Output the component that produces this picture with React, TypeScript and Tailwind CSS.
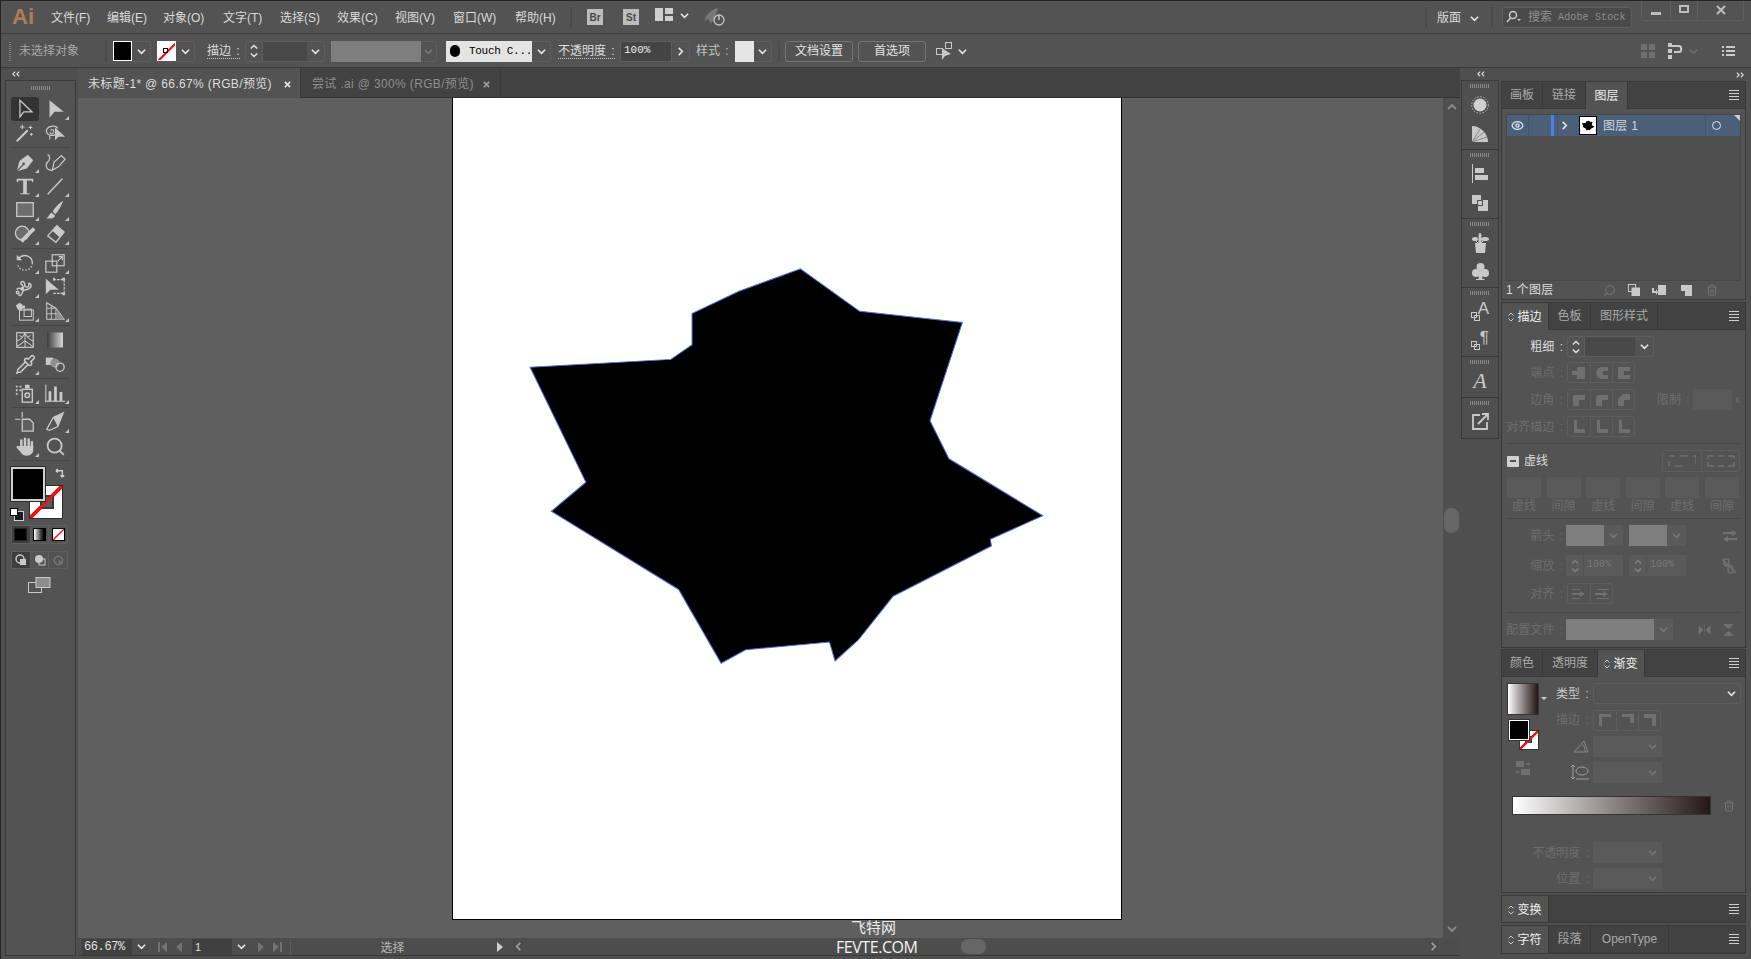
import React from "react";
import { Eye, Search, Trash2, Pipette } from "lucide-react";

const C = "#c9c9c9";

function Svg({ w = 22, h = 22, vb = "0 0 24 24", children, className = "" }: { w?: number; h?: number; vb?: string; children: React.ReactNode; className?: string }) {
  return (
    <svg width={w} height={h} viewBox={vb} fill="none" stroke={C} strokeWidth={1.6} className={"block shrink-0 " + className}>
      {children}
    </svg>
  );
}

function Chev({ color = "#e6e6e6", dir = "down", size = 9 }: { color?: string; dir?: "down" | "up" | "left" | "right"; size?: number }) {
  const pts = { down: "1,3 5,7 9,3", up: "1,7 5,3 9,7", left: "7,1 3,5 7,9", right: "3,1 7,5 3,9" }[dir];
  return (
    <svg width={size} height={size} viewBox="0 0 10 10" fill="none" stroke={color} strokeWidth={1.8} className="block shrink-0">
      <polyline points={pts} />
    </svg>
  );
}

function Burger() {
  return (
    <div className="flex flex-col gap-[2px] w-[10px]">
      <div className="h-px bg-[#cfcfcf]" />
      <div className="h-px bg-[#cfcfcf]" />
      <div className="h-px bg-[#cfcfcf]" />
      <div className="h-px bg-[#cfcfcf]" />
    </div>
  );
}

function Grip({ w = 20 }: { w?: number }) {
  return (
    <div className="h-[4px] mx-auto" style={{ width: w, backgroundImage: "repeating-linear-gradient(90deg,#8a8a8a 0 1px,transparent 1px 2px)" }} />
  );
}

function NoneSwatch({ size, cls = "" }: { size: number; cls?: string }) {
  return (
    <svg width={size} height={size} viewBox="0 0 20 20" className={"block shrink-0 " + cls}>
      <rect x="0" y="0" width="20" height="20" fill="#fff" />
      <line x1="0" y1="20" x2="20" y2="0" stroke="#f01010" strokeWidth="2.4" />
    </svg>
  );
}

/* ---------- tool icons ---------- */
const T = {
  select: <Svg><path d="M6.5 2.5v18l4.2-5.3h9z" strokeWidth={1.4} /></Svg>,
  direct: <Svg><path d="M6 2.5v19l5.5-6.5h10z" fill={C} stroke="none" /></Svg>,
  wand: <Svg><path d="M3 21 15 9" strokeWidth={2.4} /><path d="M9 3v5M6.5 5.500h5M18 4v4M16 6h4M19 12v3M17.500 13.500h3" strokeWidth={1.2} /></Svg>,
  lasso: <Svg><path d="M15 7C13 3 5 4 3 8c-2 5 4 8 9 6" strokeWidth={1.3} /><path d="M7 9c3-2 5 1 3 3-1 2-4 1-3-1M6 15c1 2 1 3 0 4" strokeWidth={1.2} /><path d="M12 6v14l4-4h7z" fill={C} stroke="none" /></Svg>,
  pen: <Svg><path d="M3 22 6 11l9-7 6 6-7 9z" fill={C} stroke="none" /><path d="m3 22 7-7" stroke="#535353" strokeWidth={1.2} /><circle cx="10.500" cy="14" r="1.500" fill="#535353" stroke="none" /></Svg>,
  curv: <Svg><path d="M9 21 11 12l8-7 4 4-7 8z" strokeWidth={1.3} /><path d="M9 21c-7 0-8-6-5-9s3-7 0-8" strokeWidth={1.3} /></Svg>,
  type: <Svg><path d="M3 4h18v4h-1l-1-2h-5v14h3v1H7v-1h3V6H5L4 8H3z" fill={C} stroke="none" /></Svg>,
  line: <Svg><path d="M4 21 20 4" /></Svg>,
  rect: <Svg><rect x="3" y="4" width="18" height="15" fill="#6d6d6d" strokeWidth={1.4} /></Svg>,
  brush: <Svg><path d="M21 2C16 5 11 10 9.500 14l3 2.500C16 13 19 7 21 2z" fill={C} stroke="none" /><path d="M8.500 15C5 16 6 20 2 21c5 1 10 0 10-3z" fill={C} stroke="none" /></Svg>,
  shaper: <Svg><circle cx="9" cy="11" r="7.500" fill="#6d6d6d" strokeWidth={1.4} /><path d="M8 20 22 6" strokeWidth={4} /></Svg>,
  eraser: <Svg><path d="m4 14 10-11 8 7-9 11z" fill="none" strokeWidth={1.4} /><path d="M9 8.500 14 3l8 7-5 5.500z" fill={C} stroke="none" /></Svg>,
  rotate: <Svg><path d="M5 7c5-6 15-3 15 5" strokeWidth={1.5} /><path d="M20 12c0 9-13 11-16 2" strokeDasharray="1.500 2" strokeWidth={1.5} /><path d="M3 3v6h6z" fill={C} stroke="none" /></Svg>,
  scale: <Svg><rect x="9" y="3" width="13" height="12" strokeWidth={1.3} /><rect x="2" y="10" width="12" height="12" strokeWidth={1.3} /><path d="m15 10 5-5M16 5h4v4" strokeWidth={1.2} /></Svg>,
  warp: <Svg><path d="M3 15c1-3 4-1 6-1s1-4-1-5 1-5 3-2-1 5 3 5 1-5 3-4 3 4-1 6-6 0-7 4-3 4-4 2" strokeWidth={1.6} /><circle cx="4" cy="18" r="1.400" /><circle cx="9" cy="14" r="1.300" /></Svg>,
  free: <Svg><path d="M2 3v17l5-5h9z" fill={C} stroke="none" /><path d="M10 4h12v15H9" strokeWidth={1.2} strokeDasharray="3 1" /><path d="M10 2h2v3h-2zM20 2h3v3h-3zM20 18h3v3h-3z" fill={C} stroke="none" /></Svg>,
  builder: <Svg><rect x="6" y="11" width="15" height="11" strokeWidth={1.1} /><rect x="11" y="10" width="8" height="8" strokeWidth={1.1} /><path d="M2 6l4-3 3 2 1 4-3 3-3-2z" fill={C} stroke="none" /><path d="M9 6h3v3H9z" fill={C} stroke="none" /></Svg>,
  persp: <Svg><path d="M3 3v18h19L13 9z" strokeWidth={1.1} /><path d="M3 9h10M3 15h15M8 6v15M13 9v12" strokeWidth={1} /><path d="M14 12l8 9H14z" fill="#8f8f8f" stroke="none" /></Svg>,
  mesh: <Svg><rect x="3" y="4" width="18" height="16" strokeWidth={1.3} /><path d="M3 13c5-1 7-4 9-9M3 19c5-2 7-5 9-6 2 1 5 4 9 6M12 4v16M21 13c-4-1-7-4-9-9M6 7l3 2M18 7l-3 2" strokeWidth={1.1} /></Svg>,
  gradient: (
    <svg width="20" height="20" viewBox="0 0 20 20" className="block"><defs><linearGradient id="g1"><stop offset="0" stopColor="#3d3d3d" /><stop offset="1" stopColor="#d8d8d8" /></linearGradient></defs><rect x="2" y="2.500" width="16" height="15" fill="url(#g1)" /></svg>
  ),
  eyedrop: <Pipette size={21} color={C} strokeWidth={1.7} />,
  blend: <Svg><rect x="2" y="5" width="8" height="8" fill={C} stroke="none" /><circle cx="12" cy="11" r="5" fill="#8f8f8f" stroke="none" /><circle cx="17.500" cy="15.500" r="4.500" strokeWidth={1.5} /></Svg>,
  spray: <Svg><rect x="9" y="8" width="11" height="14" strokeWidth={1.5} /><rect x="12" y="3" width="5" height="4" fill={C} stroke="none" /><circle cx="14.500" cy="14.500" r="2.500" /><path d="M2 4h2v2H2zM6 4h2v2H6zM2 8h2v2H2zM6 8h2v2H6zM2 12h2v2H2z" fill={C} stroke="none" /></Svg>,
  chart: <Svg><path d="M2 22V3" strokeWidth={1.2} /><path d="M1 21h22" strokeWidth={1.2} /><path d="M5 10h3v11H5zM11 5h3v16h-3zM17 11h3v10h-3z" fill={C} stroke="none" /></Svg>,
  artboard: <Svg><path d="M9 9h8l4 4v9H9z" fill="#5f5f5f" strokeWidth={1.4} /><path d="M1 9h6M9 1v6" strokeWidth={1.3} /></Svg>,
  slice: <Svg><path d="M21 2 10 7 3 20l3 1 9-4z" strokeWidth={1.4} /><path d="M21 2l-6 15-5-10z" fill={C} stroke="none" /></Svg>,
  hand: (
    <svg width="22" height="22" viewBox="0 0 24 24" fill={C} stroke="none" className="block shrink-0">
      <path d="M8 13V6M12 12V4M16 12V5M19.500 14V8" stroke={C} strokeWidth={2.7} strokeLinecap="round" />
      <path d="M6.500 12h14.500v4c0 4-3 6.500-7 6.500-3 0-5-1-6.500-3.500L3 14c-.8-1.500.8-2.800 2-1.800z" />
    </svg>
  ),
  zoom: <Search size={21} color={C} strokeWidth={2} />,
};

function Tool({ icon, active, corner = true }: { icon: React.ReactNode; active?: boolean; corner?: boolean }) {
  return (
    <div className={"relative w-[28px] h-[24px] flex items-center justify-center rounded-[3px] " + (active ? "bg-[#333333]" : "")}>
      {icon}
      {corner && <div className="absolute right-[0px] bottom-[1px] w-0 h-0 border-l-[4px] border-l-transparent border-b-[4px] border-b-[#c4c4c4]" />}
    </div>
  );
}

function ToolRow({ a, b, aCorner = true, bCorner = true, active = false }: { a: React.ReactNode; b: React.ReactNode; aCorner?: boolean; bCorner?: boolean; active?: boolean }) {
  return (
    <div className="flex gap-[2px] pl-[5px]">
      <Tool icon={a} corner={aCorner} active={active} />
      <Tool icon={b} corner={bCorner} />
    </div>
  );
}

const Sep = () => <div className="h-px bg-[#454545] mx-[5px] my-[2px]" />;

function LeftBar() {
  return (
    <div className="w-[77px] shrink-0 flex flex-col">
      <div className="h-[12px] flex items-center pl-[10px] text-[8px] leading-none text-[#c8c8c8]"><Chev dir="left" size={6} /><span className="-ml-[2px]"><Chev dir="left" size={6} /></span></div>
      <div className="ml-[4px] w-[71px] flex-1 border border-[#3a3a3a] bg-[#535353] pt-[5px]">
        <Grip />
        <div className="h-[7px]" />
        <ToolRow a={T.select} b={T.direct} aCorner={false} active />
        <ToolRow a={T.wand} b={T.lasso} aCorner={false} bCorner={false} />
        <Sep />
        <ToolRow a={T.pen} b={T.curv} bCorner={false} />
        <ToolRow a={T.type} b={T.line} />
        <ToolRow a={T.rect} b={T.brush} />
        <ToolRow a={T.shaper} b={T.eraser} />
        <Sep />
        <ToolRow a={T.rotate} b={T.scale} />
        <ToolRow a={T.warp} b={T.free} bCorner={false} />
        <ToolRow a={T.builder} b={T.persp} />
        <Sep />
        <ToolRow a={T.mesh} b={T.gradient} aCorner={false} bCorner={false} />
        <ToolRow a={T.eyedrop} b={T.blend} bCorner={false} />
        <Sep />
        <ToolRow a={T.spray} b={T.chart} />
        <Sep />
        <ToolRow a={T.artboard} b={T.slice} aCorner={false} />
        <ToolRow a={T.hand} b={T.zoom} bCorner={false} />
        <Sep />
        <div className="relative h-[58px] mt-[6px] ml-[5px]">
          <div className="absolute left-[18px] top-[18px] w-[34px] h-[34px] border border-[#2b2b2b]">
            <NoneSwatch size={32} />
            <div className="absolute left-[10px] top-[9px] w-[14px] h-[14px] border-2 border-[#3a3a3a] bg-[#5a5a5a]" />
            <svg width="32" height="32" viewBox="0 0 20 20" className="absolute left-0 top-0"><line x1="0" y1="20" x2="20" y2="0" stroke="#f01010" strokeWidth="1.600" /></svg>
          </div>
          <div className="absolute left-[0px] top-[0px] w-[34px] h-[34px] bg-black border-2 border-[#cfcfcf] outline outline-1 outline-[#2b2b2b]" />
          <svg width="11" height="11" viewBox="0 0 12 12" fill="none" stroke="#d0d0d0" strokeWidth="1.5" className="absolute left-[44px] top-[1px]"><path d="M1 3h7v7M1 3l2-2M1 3l2 2M8 10l-2-2M8 10l2-2" /></svg>
          <div className="absolute left-[3px] top-[44px] w-[10px] h-[10px] bg-[#1a1a1a] border border-[#cfcfcf]" />
          <div className="absolute left-[-1px] top-[41px] w-[8px] h-[8px] bg-white border border-black" />
        </div>
        <div className="flex h-[19px] mx-[5px] border border-[#5f5f5f] rounded-[2px] w-[57px]">
          <div className="flex-1 bg-[#3e3e3e] flex items-center justify-center"><div className="w-[13px] h-[13px] bg-black border border-[#222]" /></div>
          <div className="flex-1 border-l border-[#5f5f5f] flex items-center justify-center"><div className="w-[13px] h-[13px] border border-black bg-gradient-to-r from-white to-black" /></div>
          <div className="flex-1 border-l border-[#5f5f5f] flex items-center justify-center"><div className="border border-black"><NoneSwatch size={11} /></div></div>
        </div>
        <div className="flex h-[18px] mt-[7px] mx-[5px] border border-[#5f5f5f] rounded-[2px] w-[57px]">
          <div className="flex-1 bg-[#3e3e3e] flex items-center justify-center"><svg width="12" height="12" viewBox="0 0 12 12"><circle cx="5" cy="5" r="4" fill="none" stroke={C} strokeWidth="1.500" /><rect x="5" y="5" width="6" height="6" fill={C} /></svg></div>
          <div className="flex-1 border-l border-[#5f5f5f] flex items-center justify-center"><svg width="12" height="12" viewBox="0 0 12 12"><circle cx="5" cy="5" r="4" fill={C} /><rect x="5" y="5" width="6" height="6" fill="none" stroke={C} /></svg></div>
          <div className="flex-1 border-l border-[#5f5f5f] flex items-center justify-center"><svg width="11" height="11" viewBox="0 0 12 12"><circle cx="6" cy="6" r="4.500" fill="none" stroke="#777" strokeWidth="1.500" /><rect x="6" y="6" width="3" height="3" fill="#777" /></svg></div>
        </div>
        <div className="flex justify-center mt-[8px] pr-[2px]">
          <svg width="23" height="16" viewBox="0 0 23 16"><rect x="0.500" y="5.500" width="13" height="10" fill="none" stroke={C} /><rect x="8" y="0.500" width="14" height="10" fill="#8d8d8d" stroke={C} /></svg>
        </div>
      </div>
    </div>
  );
}

/* ---------- top ---------- */
const menus: [string, string][] = [
  ["文件(F)", "w-[56px]"], ["编辑(E)", "w-[56px]"], ["对象(O)", "w-[60px]"], ["文字(T)", "w-[57px]"], ["选择(S)", "w-[57px]"],
  ["效果(C)", "w-[58px]"], ["视图(V)", "w-[58px]"], ["窗口(W)", "w-[62px]"], ["帮助(H)", "w-[42px]"],
];

function TitleBar() {
  return (
    <div className="h-[33px] shrink-0 flex items-center bg-[#535353] border-b border-[#3a3a3a] relative">
      <span className="ml-[11px] w-[22px] text-[22px] leading-none font-bold text-[#b17d58]">Ai</span>
      <div className="flex ml-[17px] pt-[1px] text-[12px] text-[#dadada] whitespace-nowrap">
        {menus.map(([m, w]) => <span key={m} className={w}>{m}</span>)}
      </div>
      <div className="w-[2px] h-[20px] bg-[#4a4a4a] ml-[13px]" />
      <div className="ml-[15px] w-[16px] h-[16px] bg-[#bdbdbd] text-[#4a4a4a] text-[10px] font-bold flex items-center justify-center">Br</div>
      <div className="ml-[20px] w-[16px] h-[16px] bg-[#bdbdbd] text-[#4a4a4a] text-[10px] font-bold flex items-center justify-center">St</div>
      <svg width="18" height="13" viewBox="0 0 18 13" className="ml-[16px] mb-[5px]"><path d="M0 0h8v13H0zM10 0h8v6h-8zM10 8h8v5h-8z" fill="#cfcfcf" /></svg>
      <div className="ml-[7px] mb-[4px]"><Chev size={9} /></div>
      <svg width="23" height="19" viewBox="0 0 23 19" className="ml-[15px]" fill="none"><path d="M14 0C8 1 3 5 0 13l4-2 3 4 3-3C11 7 13 4 14 0z" fill="#777" /><circle cx="15" cy="12" r="5" stroke="#c4c4c4" strokeWidth="1.300" /><path d="M15 7v5" stroke="#c4c4c4" strokeWidth="1.500" /></svg>
      <div className="flex-1" />
      <div className="w-[2px] h-[20px] bg-[#4a4a4a]" />
      <span className="ml-[10px] pt-[1px] text-[12px] text-[#dadada]">版面</span>
      <div className="ml-[9px] mt-[2px]"><Chev size={9} /></div>
      <div className="ml-[12px] w-[2px] h-[20px] bg-[#4a4a4a]" />
      <div className="ml-[9px] w-[130px] h-[21px] bg-[#4a4a4a] border border-[#5f5f5f] rounded-[3px] flex items-center pl-[3px] text-[#8f8f8f] whitespace-nowrap">
        <svg width="16" height="14" viewBox="0 0 16 14" fill="none" stroke={C} strokeWidth="1.500"><circle cx="7" cy="5" r="3.500" /><path d="M4.500 8 1 12" /><path d="M11 9h4l-2 2z" fill={C} stroke="none" /></svg>
        <span className="ml-[6px] text-[12px]">搜索</span>
        <span className="ml-[6px] text-[10px] font-['Liberation_Mono',monospace] tracking-[0.15px]">Adobe Stock</span>
      </div>
      <div className="ml-[9px] self-start flex h-[20px] w-[103px] border border-t-0 border-[#5f5f5f] rounded-b-[3px]">
        <div className="w-[28px] flex items-center justify-center"><div className="w-[10px] h-[3px] bg-[#bdbdbd] mt-[5px]" /></div>
        <div className="w-[27px] border-l border-[#5f5f5f] flex items-center justify-center"><div className="w-[10px] h-[8px] border-2 border-[#bdbdbd] -mt-[3px]" /></div>
        <div className="flex-1 border-l border-[#5f5f5f] flex items-center justify-center"><svg width="10" height="10" viewBox="0 0 10 10" stroke="#bdbdbd" strokeWidth="2" className="-mt-[2px]"><path d="m1 1 8 8M9 1l-8 8" /></svg></div>
      </div>
      <div className="w-[7px]" />
    </div>
  );
}

function ChevBox({ w = 19, h = 21, color }: { w?: number; h?: number; color?: string }) {
  return (
    <div className="flex items-center justify-center border border-[#5e5e5e] border-l-0 rounded-r-[3px]" style={{ width: w, height: h }}>
      <Chev color={color} size={9} />
    </div>
  );
}

function Spinner() {
  return (
    <div className="w-[18px] h-[21px] flex flex-col items-center justify-center border border-[#5e5e5e] rounded-l-[3px]">
      <Chev dir="up" color="#e4e4e4" size={8} />
      <Chev color="#e4e4e4" size={8} />
    </div>
  );
}

function ControlBar() {
  const lbl = "text-[12px] text-[#dcdcdc] border-b border-dotted border-[#c9c9c9] leading-[14px] whitespace-nowrap [word-spacing:2px]";
  return (
    <div className="h-[34px] shrink-0 flex items-center bg-[#535353] border-b border-[#3a3a3a] pl-[4px] pt-[1px] relative">
      <div className="ml-[4px] w-[2px] h-[20px]" style={{ backgroundImage: "repeating-linear-gradient(0deg,#7c7c7c 0 1px,transparent 1px 2px)" }} />
      <span className="ml-[8px] w-[60px] text-[12px] text-[#a8a8a8] whitespace-nowrap">未选择对象</span>
      <div className="ml-[26px] w-[2px] h-[21px] bg-[#4a4a4a]" />
      <div className="ml-[6px] w-[19px] h-[20px] bg-black border border-white" />
      <ChevBox w={19} />
      <div className="ml-[6px] relative w-[19px] h-[20px] border border-white bg-white overflow-hidden">
        <NoneSwatch size={19} />
        <div className="absolute left-[5px] top-[6px] w-[5px] h-[5px] border border-black" />
      </div>
      <ChevBox w={19} />
      <span className={"ml-[12px] w-[33px] " + lbl}>描边 :</span>
      <div className="ml-[5px]"><Spinner /></div>
      <div className="w-[44px] h-[21px] bg-[#484848] border-y border-[#5e5e5e]" />
      <ChevBox w={18} />
      <div className="ml-[6px] w-[90px] h-[21px] bg-[#7e7e7e]" />
      <ChevBox w={16} color="#7a7a7a" />
      <div className="ml-[9px] w-[86px] h-[21px] bg-[#e4e4e4] flex items-center pl-[4px] text-black">
        <div className="w-[12px] h-[12px] rounded-full bg-black" />
        <span className="ml-[9px] text-[11px] font-['Liberation_Mono',monospace] tracking-[-0.3px] whitespace-nowrap">Touch C...</span>
      </div>
      <ChevBox w={19} />
      <span className={"ml-[7px] w-[57px] " + lbl}>不透明度 :</span>
      <div className="ml-[5px] w-[52px] h-[21px] bg-[#444444] border border-[#5e5e5e] rounded-l-[3px] text-[11px] text-[#eeeeee] pl-[3px] leading-[17px] font-['Liberation_Mono',monospace]">100%</div>
      <div className="w-[18px] h-[21px] border border-l-0 border-[#5e5e5e] rounded-r-[3px] flex items-center justify-center"><Chev dir="right" size={9} /></div>
      <span className="ml-[6px] w-[31px] text-[12px] text-[#c4c4c4] whitespace-nowrap [word-spacing:2px]">样式 :</span>
      <div className="ml-[8px] w-[19px] h-[21px] bg-[#e4e4e4]" />
      <ChevBox w={18} />
      <div className="ml-[6px] w-[2px] h-[21px] bg-[#4a4a4a]" />
      <div className="ml-[5px] w-[68px] h-[21px] border border-[#757575] rounded-[3px] text-[12px] text-[#e2e2e2] flex items-center justify-center">文档设置</div>
      <div className="ml-[5px] w-[68px] h-[21px] border border-[#757575] rounded-[3px] text-[12px] text-[#e2e2e2] flex items-center justify-center">首选项</div>
      <svg width="18" height="18" viewBox="0 0 18 18" fill="none" stroke={C} className="ml-[10px]"><rect x="0.500" y="6.500" width="6" height="6" /><rect x="9.500" y="0.500" width="6" height="6" /><path d="M6 6v12l3-4 6-2z" fill="#c9c9c9" stroke="none" /></svg>
      <div className="ml-[4px]"><Chev size={9} /></div>
      <div className="flex-1" />
      <svg width="14" height="14" viewBox="0 0 14 14" fill="#6f6f6f"><path d="M0 0h6v6H0zM8 0h6v6H8zM0 8h6v6H0zM8 8h6v6H8z" /></svg>
      <svg width="16" height="16" viewBox="0 0 16 16" fill="none" className="ml-[13px]"><path d="M0 0h4v4H0zM0 6h4v4H0zM0 12h4v4H0z" fill="#c9c9c9" /><path d="M4 3h7c3 0 3 6 0 6H6" stroke="#c9c9c9" strokeWidth="2" /></svg>
      <div className="ml-[5px]"><Chev color="#6f6f6f" size={9} /></div>
      <div className="ml-[24px] mr-[16px] flex flex-col gap-[2px]">
        {[0, 1, 2].map((i) => (
          <div key={i} className="flex gap-[2px]"><div className="w-[2px] h-[2px] bg-[#c9c9c9]" /><div className="w-[9px] h-[2px] bg-[#c9c9c9]" /></div>
        ))}
      </div>
    </div>
  );
}

/* ---------- document ---------- */
function DocTab({ label, active }: { label: string; active?: boolean }) {
  return (
    <div className={"h-[30px] flex items-center whitespace-nowrap text-[12px] tracking-[0.35px] border-r border-[#3a3a3a] pt-[2px] " + (active ? "w-[223px] bg-[#535353] text-[#dcdcdc] pl-[10px]" : "w-[200px] text-[#8e8e8e] pl-[11px]")}>
      <span className={active ? "w-[196px]" : "w-[171px]"}>{label}</span>
      <svg width="7" height="7" viewBox="0 0 8 8" stroke={active ? "#e0e0e0" : "#9a9a9a"} strokeWidth="2"><path d="m1 1 6 6M7 1 1 7" /></svg>
    </div>
  );
}

const shape = "475,329 601,322 620,309 620,281 662,261 717,241 770,279 862,289 833,377 850,411 934,462 887,483 888,489 800,534 769,573 748,592 743,575 668,582 646,594 608,528 494,458 525,432";

function Document() {
  return (
    <div className="flex-1 min-w-0 flex flex-col relative">
      <div className="h-[30px] shrink-0 bg-[#424242] border-b border-[#333333] flex">
        <DocTab label="未标题-1* @ 66.67% (RGB/预览)" active />
        <DocTab label="尝试 .ai @ 300% (RGB/预览)" />
      </div>
      <div className="flex-1 min-h-0 flex bg-[#5f5f5f]">
        <div className="flex-1 min-w-0 pl-[374px]">
          <div className="w-[670px] h-[822px] bg-white border border-black border-t-0">
            <svg width="668" height="821" viewBox="406 88 598 735" preserveAspectRatio="none" className="block">
              <polygon points={shape} fill="#000" stroke="#4a6fe0" strokeWidth="0.900" />
            </svg>
          </div>
        </div>
        <div className="w-[17px] shrink-0 bg-[#4f4f4f] flex flex-col items-center pt-[4px] pb-[4px]">
          <Chev dir="up" color="#8a8a8a" size={10} />
          <div className="h-[396px] shrink-0" />
          <div className="w-[15px] h-[25px] rounded-[7px] bg-[#666666]" />
          <div className="flex-1" />
          <Chev color="#8a8a8a" size={10} />
        </div>
      </div>
      <div className="h-[18px] shrink-0 bg-[#4d4d4d] border-b border-[#3a3a3a] flex items-center text-[#e0e0e0]">
        <div className="ml-[4px] w-[50px] h-[16px] bg-[#404040] text-[12px] leading-[16px] pl-[2px] font-['Liberation_Mono',monospace] tracking-[-0.4px]">66.67%</div>
        <div className="w-[18px] flex justify-center"><Chev size={9} /></div>
        <svg width="24" height="10" viewBox="0 0 24 10" fill="#727272" className="ml-[8px]"><path d="M0 0h2v10H0zM9 0v10L3 5zM24 0v10l-6-5z" /></svg>
        <div className="ml-[10px] w-[40px] h-[16px] bg-[#404040] text-[11px] leading-[16px] pl-[3px]">1</div>
        <div className="w-[18px] flex justify-center"><Chev size={9} /></div>
        <svg width="24" height="10" viewBox="0 0 24 10" fill="#727272" className="ml-[8px]"><path d="M0 0v10l6-5zM15 0v10l6-5zM22 0h2v10h-2z" /></svg>
        <div className="ml-[8px] w-[204px] h-[16px] border-l border-[#5c5c5c] text-[12px] text-[#b8b8b8] text-center leading-[18px]">选择</div>
        <svg width="6" height="10" viewBox="0 0 6 10" fill="#d0d0d0" className="ml-[3px]"><path d="M0 0v10l6-5z" /></svg>
        <div className="ml-[11px]"><Chev dir="left" color="#a0a0a0" size={9} /></div>
        <div className="ml-[438px] w-[25px] h-[15px] rounded-[7px] bg-[#666666]" />
        <div className="flex-1" />
        <div className="mr-[22px]"><Chev dir="right" color="#a0a0a0" size={9} /></div>
      </div>
      <div className="absolute left-[773px] top-[851px] text-[15px] leading-[18px] text-[#ececec]">飞特网</div>
      <div className="absolute left-[758px] top-[869px] text-[16px] leading-[20px] text-[#f4f4f4] font-['Open_Sans',sans-serif] tracking-[-0.45px]">FEVTE.COM</div>
    </div>
  );
}

/* ---------- dock ---------- */
function DockGroup({ children, h }: { children: React.ReactNode; h: number }) {
  return (
    <div className="border-b border-[#3a3a3a] flex flex-col items-center pt-[3px]" style={{ height: h }}>
      <Grip w={20} />
      <div className="mt-[2px] grid auto-rows-[29px] items-center justify-items-center">{children}</div>
    </div>
  );
}

function Dock() {
  return (
    <div className="w-[41px] shrink-0 flex flex-col pl-[1px]">
      <div className="h-[12px] flex items-center justify-center"><Chev dir="left" size={6} /><span className="-ml-[2px]"><Chev dir="left" size={6} /></span></div>
      <div className="w-[38px] border-x border-t border-[#3a3a3a]">
        <DockGroup h={69}>
          <svg width="18" height="18" viewBox="0 0 18 18"><circle cx="9" cy="9" r="6.500" fill="#d0d0d0" /><circle cx="9" cy="9" r="8.300" fill="none" stroke="#bdbdbd" strokeDasharray="1.500 1.500" /></svg>
          <svg width="16" height="16" viewBox="0 0 16 16"><path d="M0 0c8 0 16 7 16 16H0z" fill="#c9c9c9" /><path d="M0 16 12 6M0 16 8 3M0 16l15-5" stroke="#7a7a7a" strokeWidth=".8" /></svg>
        </DockGroup>
        <DockGroup h={69}>
          <svg width="16" height="19" viewBox="0 0 16 19"><path d="M0 0h1v19H0zM3 4h9v5H3zM3 11h13v5H3z" fill="#c9c9c9" /></svg>
          <svg width="16" height="16" viewBox="0 0 16 16"><path d="M0 0h9v5H5v4H0zM11 5h5v11H6v-5h5zM6 6h4v4H6z" fill="#c9c9c9" /></svg>
        </DockGroup>
        <DockGroup h={69}>
          <svg width="17" height="20" viewBox="0 0 17 20" fill="#c9c9c9"><path d="M3 10h11l-1 10H4z" /><ellipse cx="3" cy="6" rx="3" ry="2" /><ellipse cx="8" cy="3" rx="1.500" ry="3" /><ellipse cx="13" cy="6" rx="4" ry="2" /><path d="M7 5h2v5H7zM3 7l3 3 M12 7l-3 3" stroke="#c9c9c9" /></svg>
          <svg width="17" height="17" viewBox="0 0 17 17" fill="#c9c9c9"><circle cx="8.500" cy="4" r="4" /><circle cx="4" cy="10" r="4" /><circle cx="13" cy="10" r="4" /><path d="M7.500 8h2l1 8h2v1H4v-1h2.500z" /></svg>
        </DockGroup>
        <DockGroup h={69}>
          <div className="relative w-[18px] h-[18px]">
            <span className="absolute right-0 -top-[3px] text-[17px] leading-[17px] text-[#c9c9c9]">A</span>
            <svg width="9" height="9" viewBox="0 0 9 9" className="absolute left-0 bottom-0" fill="none" stroke="#c9c9c9"><rect x=".5" y=".5" width="5" height="5" /><rect x="3.500" y="3.500" width="5" height="5" /></svg>
          </div>
          <div className="relative w-[18px] h-[18px]">
            <span className="absolute right-0 -top-[3px] text-[17px] leading-[17px] text-[#c9c9c9]">¶</span>
            <svg width="9" height="9" viewBox="0 0 9 9" className="absolute left-0 bottom-0" fill="none" stroke="#c9c9c9"><rect x=".5" y=".5" width="5" height="5" /><rect x="3.500" y="3.500" width="5" height="5" /></svg>
          </div>
        </DockGroup>
        <DockGroup h={41}>
          <span className="text-[22px] leading-[24px] italic font-['Liberation_Serif',serif] text-[#c9c9c9]">A</span>
        </DockGroup>
        <DockGroup h={41}>
          <svg width="17" height="17" viewBox="0 0 17 17" fill="none" stroke="#c9c9c9" strokeWidth="1.800"><path d="M8 2H1v14h14V9" /><path d="m6 11 9-9M10 1h6v6" /></svg>
        </DockGroup>
      </div>
    </div>
  );
}

/* ---------- panels ---------- */
function Tabs({ tabs, activeIdx, arrow = true }: { tabs: [string, number][]; activeIdx: number; arrow?: boolean }) {
  return (
    <div className="h-[27px] shrink-0 bg-[#424242] flex items-stretch border-b border-[#3a3a3a]">
      {tabs.map(([t, w], i) => (
        <div key={t} className={"flex items-center justify-center text-[12px] whitespace-nowrap border-r border-[#383838] " + (i === activeIdx ? "bg-[#535353] text-[#f0f0f0] -mb-px" : "text-[#a9a9a9]")} style={{ width: w }}>
          {i === activeIdx && arrow && (
            <svg width="6" height="10" viewBox="0 0 6 10" fill="none" stroke="#c9c9c9" className="mr-[3px]"><path d="M.5 3.500 3 1l2.500 2.500M.5 6.500 3 9l2.500-2.500" /></svg>
          )}
          {t}
        </div>
      ))}
      <div className="flex-1" />
      <div className="flex items-center pr-[6px]"><Burger /></div>
    </div>
  );
}

const Panel = ({ children, h, cls = "" }: { children: React.ReactNode; h: number; cls?: string }) => (
  <div className={"border border-[#3a3a3a] bg-[#535353] flex flex-col overflow-hidden " + cls} style={{ height: h }}>{children}</div>
);

function Label({ text, w = 57, dim = true, cls = "" }: { text: string; w?: number; dim?: boolean; cls?: string }) {
  return <span className={"text-[12px] text-right whitespace-nowrap shrink-0 [word-spacing:2px] " + (dim ? "text-[#6e6e6e] " : "text-[#dcdcdc] ") + cls} style={{ width: w }}>{text} :</span>;
}

function BtnGroup({ icons, w = 22 }: { icons: React.ReactNode[]; w?: number }) {
  return (
    <div className="flex h-[21px] border border-[#5e5e5e] rounded-[3px]">
      {icons.map((ic, i) => (
        <div key={i} className={"flex items-center justify-center " + (i ? "border-l border-[#5e5e5e]" : "")} style={{ width: w }}>{ic}</div>
      ))}
    </div>
  );
}

const Mini = ({ d }: { d: string }) => (
  <svg width="14" height="14" viewBox="0 0 14 14" fill="#707070"><path d={d} /></svg>
);

function DisSelect({ w = 69 }: { w?: number }) {
  return (
    <div className="h-[21px] bg-[#5a5a5a] flex items-center justify-end pr-[5px]" style={{ width: w }}>
      <Chev color="#777777" size={9} />
    </div>
  );
}

function LayersPanel() {
  return (
    <Panel h={219}>
      <Tabs tabs={[["画板", 41], ["链接", 43], ["图层", 42]]} activeIdx={2} arrow={false} />
      <div className="flex-1 px-[4px] pt-[5px] flex flex-col min-h-0">
        <div className="h-[167px] shrink-0 border border-[#474747] bg-[#4f4f4f]">
          <div className="h-[21px] bg-[#4b6078] flex items-center relative">
            <div className="w-[22px] h-full border-r border-[#435468] flex items-center justify-center"><Eye size={13} color="#dfe6ee" strokeWidth={2.4} /></div>
            <div className="w-[22px]" />
            <div className="w-[3px] h-full bg-[#4d7fe8]" />
            <div className="w-[4px] h-full border-r border-[#435468]" />
            <div className="ml-[2px]"><Chev dir="right" size={9} /></div>
            <div className="ml-[10px] w-[18px] h-[19px] bg-white border border-black flex items-center justify-center">
              <svg width="14" height="13" viewBox="440 230 510 370"><polygon points={shape} fill="#000" /></svg>
            </div>
            <span className="ml-[6px] text-[12px] text-[#cfd6df] whitespace-nowrap tracking-[0.3px]">图层 1</span>
            <div className="flex-1" />
            <div className="w-[35px] h-full border-l border-[#435468] pl-[6px] flex items-center"><div className="w-[9px] h-[9px] rounded-full border border-[#dfe6ee]" /></div>
            <div className="absolute right-0 top-0 w-0 h-0 border-l-[6px] border-l-transparent border-t-[6px] border-t-[#d0d0d0]" />
          </div>
        </div>
        <div className="h-[18px] shrink-0 flex items-center text-[12px] text-[#dcdcdc] relative whitespace-nowrap tracking-[0.3px]">
          <span>1 个图层</span>
          <div className="absolute left-[97px] flex items-center">
            <Search size={13} color="#727272" strokeWidth={2} className="-scale-x-100" />
            <svg width="12" height="12" viewBox="0 0 12 12" fill="none" stroke={C} className="ml-[12px]"><rect x=".5" y=".5" width="7" height="7" /><rect x="4" y="4" width="7.500" height="7.500" fill={C} /></svg>
            <svg width="14" height="10" viewBox="0 0 14 10" fill={C} className="ml-[12px]"><path d="M6 0h8v10H6zM0 3h2v3h2V4l2 3-2 3V8H0z" /></svg>
            <svg width="11" height="11" viewBox="0 0 11 11" fill={C} className="ml-[15px]"><path d="M0 0h11v11H4V6H0z" /></svg>
            <Trash2 size={12} color="#727272" className="ml-[14px]" />
          </div>
        </div>
      </div>
    </Panel>
  );
}

const cornerA = "M1 2h12v5H7v6H1z";
const alignA = "M2 0h3v9h8v4H2z";

function StrokePanel() {
  const dashLabels = ["虚线", "间隙", "虚线", "间隙", "虚线", "间隙"];
  return (
    <Panel h={346} cls="mt-[2px]">
      <Tabs tabs={[["描边", 47], ["色板", 42], ["图形样式", 67]]} activeIdx={0} />
      <div className="flex-1 min-h-0 pl-[4px] pr-[5px]">
        <div className="flex items-center h-[21px] mt-[6px] gap-[4px]">
          <Label text="粗细" dim={false} />
          <div className="flex items-center">
            <Spinner />
            <div className="w-[50px] h-[21px] bg-[#484848] border-y border-[#5e5e5e]" />
            <ChevBox w={19} />
          </div>
        </div>
        <div className="flex items-center h-[21px] mt-[5px] gap-[4px]">
          <Label text="端点" />
          <BtnGroup icons={[<Mini d="M0 5h5V1h8v12H5V9H0z" />, <Mini d="M7 1h6v4H8v4h5v4H7A6 6 0 0 1 7 1z" />, <Mini d="M1 1h12v4H7v4h6v4H1z" />]} />
        </div>
        <div className="flex items-center h-[21px] mt-[6px] gap-[4px]">
          <Label text="边角" />
          <BtnGroup icons={[<Mini d={cornerA} />, <Mini d="M5 2h8v5H7v6H1V6a4 4 0 0 1 4-4z" />, <Mini d="M6 1h7v6H7v6H1V6z" />]} />
          <Label text="限制" w={31} cls="ml-[18px]" />
          <div className="ml-[1px] w-[39px] h-[21px] bg-[#5a5a5a]" />
          <span className="text-[10px] text-[#6e6e6e] -ml-[1px]">x</span>
        </div>
        <div className="flex items-center h-[21px] mt-[6px] gap-[4px]">
          <Label text="对齐描边" />
          <BtnGroup icons={[<Mini d={alignA} />, <Mini d={alignA} />, <Mini d={alignA} />]} />
        </div>
        <div className="h-px bg-[#454545] mt-[6px] mx-[1px]" />
        <div className="flex items-center h-[22px] mt-[6px]">
          <div className="ml-[1px] w-[12px] h-[11px] bg-[#d0d0d0] rounded-[1px] flex items-center justify-center"><div className="w-[6px] h-[2px] bg-[#535353]" /></div>
          <span className="ml-[5px] text-[12px] text-[#dcdcdc]">虚线</span>
          <div className="flex-1" />
          <div className="flex h-[22px] border border-[#5e5e5e] rounded-[3px]">
            <div className="w-[38px] flex items-center justify-center"><svg width="28" height="12" viewBox="0 0 28 12" fill="none" stroke="#707070" strokeWidth="1.500"><path d="M1 12V6M1 1h6M12 1h8M25 1h3v8M7 11h8" /></svg></div>
            <div className="w-[38px] border-l border-[#5e5e5e] flex items-center justify-center"><svg width="28" height="12" viewBox="0 0 28 12" fill="none" stroke="#707070" strokeWidth="1.500"><path d="M1 4V1h6M1 7v4h6M11 1h6M21 1h6v3M27 7v4h-6M11 11h6" /></svg></div>
          </div>
        </div>
        <div className="flex justify-between mt-[5px] pl-[1px] pr-[1px]">
          {dashLabels.map((l, i) => (
            <div key={i} className="w-[34px] flex flex-col items-center">
              <div className="w-[34px] h-[21px] bg-[#5a5a5a]" />
              <span className="text-[12px] leading-[17px] text-[#6e6e6e]">{l}</span>
            </div>
          ))}
        </div>
        <div className="h-px bg-[#454545] mt-[3px] mx-[1px]" />
        <div className="flex items-center h-[21px] mt-[6px]">
          <Label text="箭头" />
          <div className="ml-[3px] w-[38px] h-[21px] bg-[#7e7e7e]" />
          <div className="w-[19px] h-[21px] bg-[#5a5a5a] flex items-center justify-center"><Chev color="#777" size={9} /></div>
          <div className="ml-[6px] w-[38px] h-[21px] bg-[#7e7e7e]" />
          <div className="w-[19px] h-[21px] bg-[#5a5a5a] flex items-center justify-center"><Chev color="#777" size={9} /></div>
          <svg width="14" height="12" viewBox="0 0 14 12" fill="#707070" className="ml-[37px]"><path d="M0 2h9V0l5 3-5 3V4H0zM14 8H5V6L0 9l5 3v-2h9z" /></svg>
        </div>
        <div className="flex items-center h-[21px] mt-[9px]">
          <Label text="缩放" />
          <div className="ml-[3px] w-[18px] h-[21px] bg-[#5a5a5a] border-r border-[#535353] flex flex-col items-center justify-center"><Chev dir="up" color="#808080" size={8} /><Chev color="#808080" size={8} /></div>
          <div className="w-[39px] h-[21px] bg-[#5a5a5a] text-[10px] leading-[19px] pl-[3px] text-[#787878] font-['Liberation_Mono',monospace]">100%</div>
          <div className="ml-[6px] w-[18px] h-[21px] bg-[#5a5a5a] border-r border-[#535353] flex flex-col items-center justify-center"><Chev dir="up" color="#808080" size={8} /><Chev color="#808080" size={8} /></div>
          <div className="w-[39px] h-[21px] bg-[#5a5a5a] text-[10px] leading-[19px] pl-[3px] text-[#787878] font-['Liberation_Mono',monospace]">100%</div>
          <svg width="16" height="16" viewBox="0 0 16 16" fill="none" stroke="#707070" strokeWidth="1.500" className="ml-[35px]"><rect x="3" y="1" width="5" height="7" rx="2.500" /><rect x="7" y="8" width="5" height="7" rx="2.500" /><path d="m1 1 14 14" /></svg>
        </div>
        <div className="flex items-center h-[21px] mt-[7px] gap-[4px]">
          <Label text="对齐" />
          <BtnGroup icons={[<Mini d="M0 2h8v1H0zM0 6h8V4l5 3-5 3V8H0zM0 11h8v1H0z" />, <Mini d="M2 2h12v1H2zM0 6h8V4l5 3-5 3V8H0zM2 11h12v1H2z" />]} />
        </div>
        <div className="h-px bg-[#454545] mt-[8px] mx-[1px]" />
        <div className="flex items-center h-[21px] mt-[6px]">
          <Label text="配置文件" />
          <div className="ml-[3px] w-[88px] h-[21px] bg-[#7e7e7e]" />
          <div className="w-[19px] h-[21px] bg-[#5a5a5a] flex items-center justify-center"><Chev color="#777" size={9} /></div>
          <svg width="13" height="10" viewBox="0 0 13 10" className="ml-[25px]" fill="none" stroke="#707070"><path d="M1 1v8l4-4zM12 1v8L8 5z" fill="#707070" /><path d="M6.500 0v10" strokeDasharray="1 1" /></svg>
          <svg width="11" height="12" viewBox="0 0 11 12" className="ml-[12px]" fill="#707070"><path d="M0 0h11L5.500 5zM0 12h11L5.500 7z" /></svg>
        </div>
      </div>
    </Panel>
  );
}

function GradientPanel() {
  return (
    <Panel h={244} cls="mt-[1px]">
      <Tabs tabs={[["颜色", 41], ["透明度", 55], ["渐变", 47]]} activeIdx={2} />
      <div className="flex-1 min-h-0 flex pl-[5px]">
        <div className="w-[47px] shrink-0 relative pt-[6px]">
          <div className="w-[32px] h-[32px] border border-[#333] bg-gradient-to-r from-white via-[#8d8686] to-[#231815]" />
          <div className="absolute left-[34px] top-[20px] w-0 h-0 border-x-[3px] border-x-transparent border-t-[3px] border-t-[#cfcfcf]" />
          <div className="absolute left-[12px] top-[53px] w-[20px] h-[20px] border border-[#333]">
            <NoneSwatch size={18} />
            <div className="absolute left-[5px] top-[5px] w-[7px] h-[7px] bg-[#5a5a5a] border border-[#3a3a3a]" />
            <svg width="18" height="18" viewBox="0 0 20 20" className="absolute left-0 top-0"><line x1="0" y1="20" x2="20" y2="0" stroke="#f01010" strokeWidth="2.400" /></svg>
          </div>
          <div className="absolute left-[2px] top-[43px] w-[20px] h-[20px] bg-black border border-white outline outline-1 outline-[#333]" />
          <svg width="16" height="14" viewBox="0 0 16 14" fill="#707070" className="absolute left-[8px] top-[84px]"><path d="M1 0h8v6H1zM6 8h9v6H6zM11 2h5l-2.500 3zM0 12h5l-2.500-3z" /></svg>
        </div>
        <div className="flex-1 min-w-0 pt-[6px]">
          <div className="flex items-center h-[21px]">
            <span className="w-[33px] ml-[2px] text-[12px] text-[#c8c8c8] whitespace-nowrap [word-spacing:2px]">类型 :</span>
            <div className="ml-[4px] w-[148px] h-[21px] border border-[#5e5e5e] rounded-[3px] flex items-center justify-end pr-[4px]"><Chev size={9} /></div>
          </div>
          <div className="flex items-center h-[22px] mt-[5px]">
            <span className="w-[33px] ml-[2px] text-[12px] text-[#6e6e6e] whitespace-nowrap [word-spacing:2px]">描边 :</span>
            <div className="ml-[4px]"><BtnGroup icons={[<Mini d="M1 1h12v3H4v9H1z" />, <Mini d="M1 1h12v9H9V4H1z" />, <Mini d="M1 1h12v12H9V5H1z" />]} /></div>
          </div>
          <div className="flex items-center h-[21px] mt-[5px]">
            <svg width="16" height="13" viewBox="0 0 16 13" fill="none" stroke="#8a8a8a" className="ml-[19px]"><path d="M1 12h14L11 1zM9 5c3 1 3 4 3 7" /></svg>
            <div className="ml-[4px]"><DisSelect /></div>
          </div>
          <div className="flex items-center h-[21px] mt-[5px]">
            <svg width="18" height="17" viewBox="0 0 18 17" fill="none" stroke="#a0a0a0" className="ml-[17px]"><path d="M2 1v14M0 3l2-2 2 2M0 13l2 2 2-2M5 15h13" /><ellipse cx="11" cy="7" rx="6" ry="4" /></svg>
            <div className="ml-[4px]"><DisSelect /></div>
          </div>
        </div>
      </div>
      <div className="shrink-0 flex items-center pl-[10px] h-[19px] mb-[27px]">
        <div className="w-[199px] h-[19px] border border-[#333] bg-[linear-gradient(90deg,#ffffff,#8d8686_50%,#231815)]" />
        <Trash2 size={12} color="#727272" className="ml-[12px]" />
      </div>
      <div className="flex items-center h-[21px] pl-[4px]">
        <Label text="不透明度" w={83} />
        <div className="ml-[4px]"><DisSelect /></div>
      </div>
      <div className="flex items-center h-[21px] mt-[5px] mb-[3px] pl-[4px]">
        <Label text="位置" w={83} />
        <div className="ml-[4px]"><DisSelect /></div>
      </div>
    </Panel>
  );
}

function Panels() {
  return (
    <div className="w-[245px] shrink-0 flex flex-col">
      <div className="h-[13px] shrink-0 flex items-center justify-end pr-[1px]"><Chev dir="right" size={6} /><span className="-ml-[2px]"><Chev dir="right" size={6} /></span></div>
      <LayersPanel />
      <StrokePanel />
      <GradientPanel />
      <Panel h={28} cls="mt-[2px]"><Tabs tabs={[["变换", 47]]} activeIdx={0} /></Panel>
      <Panel h={29} cls="mt-[2px]"><Tabs tabs={[["字符", 47], ["段落", 42], ["OpenType", 78]]} activeIdx={0} /></Panel>
    </div>
  );
}

export default function App() {
  return (
    <div className="w-[1751px] h-[959px] overflow-hidden bg-[#4f4f4f] flex flex-col border-t border-l border-[#262626] font-['Liberation_Sans','Noto_Sans_CJK_SC',sans-serif]">
      <TitleBar />
      <ControlBar />
      <div className="flex-1 min-h-0 flex pb-[3px]">
        <LeftBar />
        <Document />
        <Dock />
        <Panels />
        <div className="w-[5px] shrink-0" />
      </div>
    </div>
  );
}
